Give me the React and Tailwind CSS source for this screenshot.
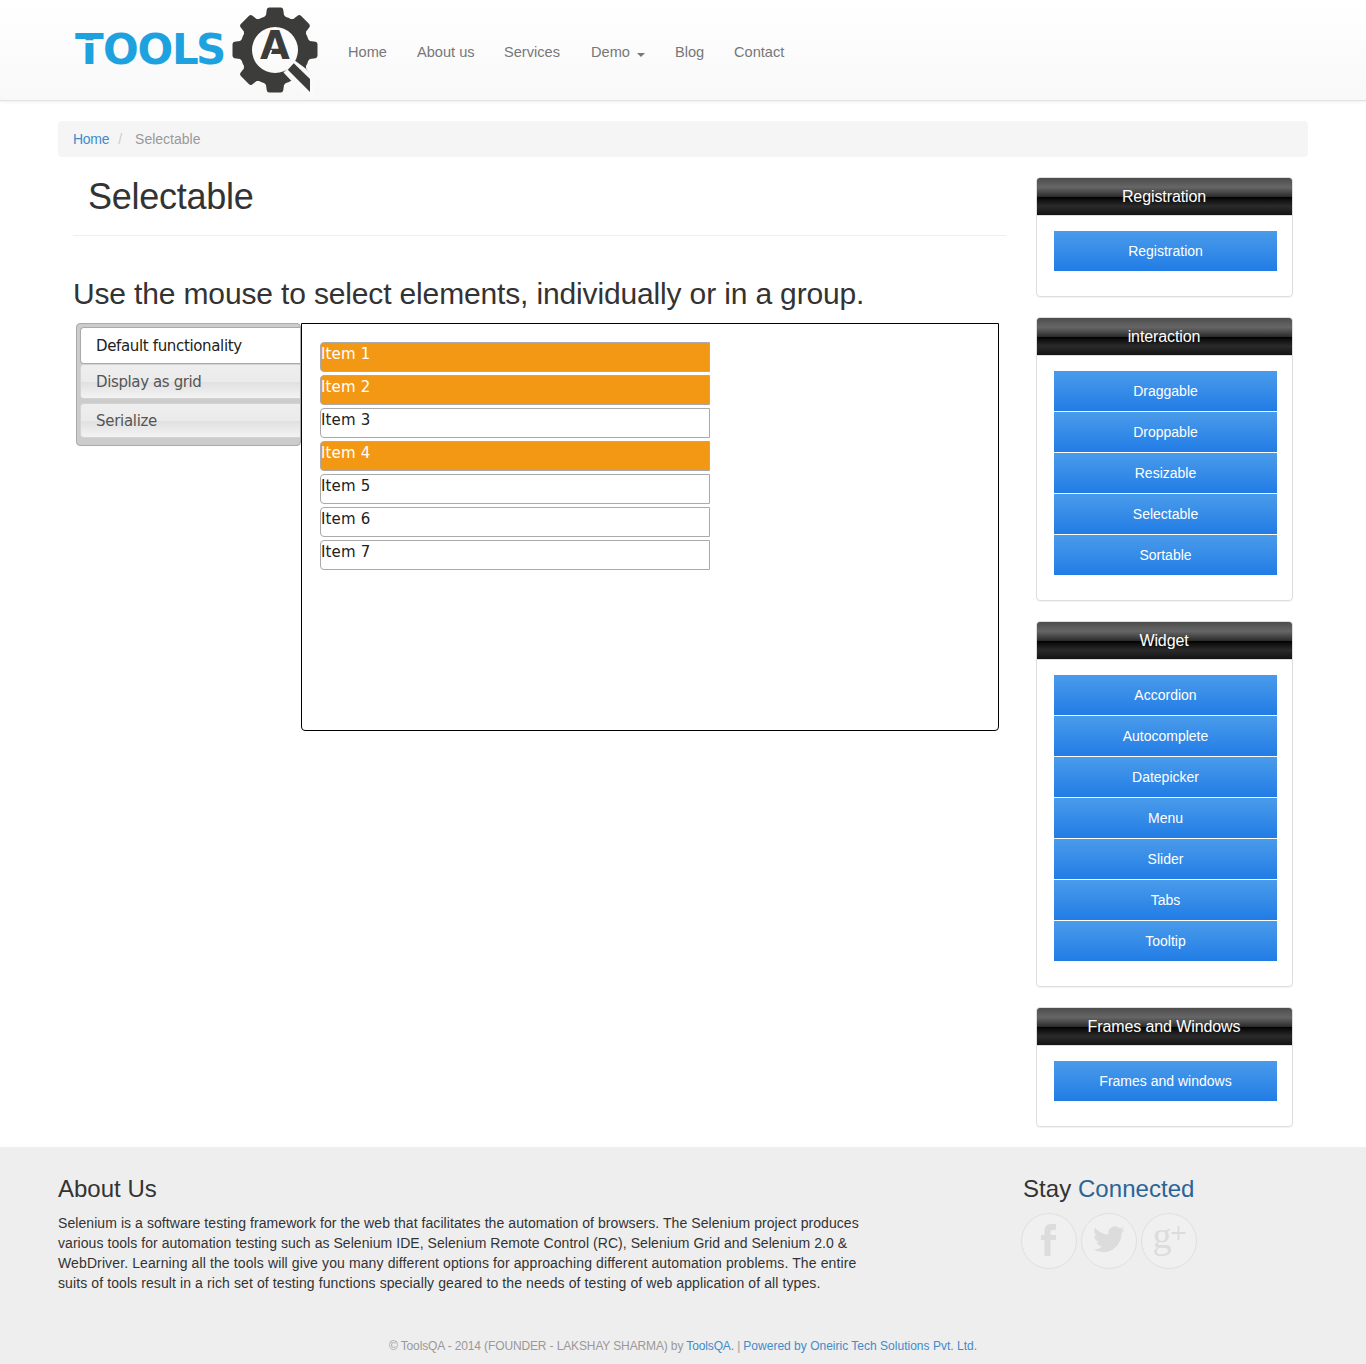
import React from "react";

const navItems = [
  { label: "Home", cls: "w-[69px]" },
  { label: "About us", cls: "w-[87px]" },
  { label: "Services", cls: "w-[87px]" },
  { label: "Demo", cls: "w-[84px]", caret: true },
  { label: "Blog", cls: "w-[59px]" },
  { label: "Contact", cls: "w-[80px]" },
];

const panels = [
  { title: "Registration", links: ["Registration"] },
  { title: "interaction", links: ["Draggable", "Droppable", "Resizable", "Selectable", "Sortable"] },
  { title: "Widget", links: ["Accordion", "Autocomplete", "Datepicker", "Menu", "Slider", "Tabs", "Tooltip"] },
  { title: "Frames and Windows", links: ["Frames and windows"] },
];

const selected = [1, 2, 4];

function Logo() {
  const teeth = [0, 45, 90, 135, 180, 225, 270, 315];
  return (
    <svg width="270" height="100" viewBox="60 0 270 100" className="block shrink-0" aria-label="ToolsQA">
      <g fill="#1ea2df" fontFamily="'DejaVu Sans'" fontWeight="bold" fontSize="42">
        <text x="75 103 137.500 172 196" y="63.700">TOOLS</text>
      </g>
      <rect x="82" y="40.300" width="16" height="2.700" fill="#fcfcfc" />
      <g fill="#3c3c3a">
        {teeth.map((a) => (
          <path
            key={a}
            transform={`rotate(${a} 275 50)`}
            d="M261.500 20 L266 15 L266.800 9.500 Q267.200 7.500 269.200 7.500 L280.800 7.500 Q282.800 7.500 283.200 9.500 L284 15 L288.500 20 Z"
          />
        ))}
        <path fillRule="evenodd" d="M275 15a35 35 0 1 0 0 70a35 35 0 1 0 0-70ZM275 27a23 23 0 1 1 0 46a23 23 0 1 1 0-46Z" />
      </g>
      <path d="M292 58.500 L305 68 L314 76 L314 98 L308 97 L291 80.500 L283.500 72.500 L288 68Z" fill="#fafafa" />
      <path d="M293.800 63.200 L310 79 L310 92 L287.800 69.800Z" fill="#3c3c3a" />
      <text x="275" y="59.300" textAnchor="middle" fill="#3c3c3a" fontFamily="'DejaVu Sans'" fontWeight="bold" fontSize="38.500">A</text>
      <path d="M271.500 50 L267.700 60" stroke="#fcfcfc" strokeWidth="1.800" />
    </svg>
  );
}

function Header() {
  return (
    <header className="h-[101px] border-b border-[#e2e2e2] bg-linear-to-b from-white to-[#f8f8f8] pl-[60px] shadow-[0_1px_3px_rgba(0,0,0,0.07)]">
      <nav className="flex h-[100px]">
        <Logo />
        <ul className="flex pt-[42px] pl-[18px] text-[14.6px] leading-5 text-[#777]">
          {navItems.map((n) => (
            <li key={n.label} className={`${n.cls} flex whitespace-nowrap`}>
              {n.label}
              {n.caret && <span className="mt-[11px] ml-[7px] h-0 w-0 border-x-4 border-t-4 border-x-transparent border-t-[#777]" />}
            </li>
          ))}
        </ul>
      </nav>
    </header>
  );
}

function Tabs() {
  return (
    <section className="flex items-start pl-[3px] font-['DejaVu_Sans',sans-serif] text-[15px]">
      <ul className="h-[123px] w-[225px] rounded-[4px] border border-[#aaa] bg-[#ccc] pt-[3px] pl-[3px] leading-5">
        <li className="h-[37px] rounded-l-[4px] border border-r-0 border-[#aaa] bg-white pt-[8px] pl-[15px] tracking-[-0.35px] text-[#212121]">
          Default functionality
        </li>
        <li className="h-[35px] rounded-l-[4px] border border-r-0 border-[#d3d3d3] bg-[linear-gradient(#eee_0%,#ebebeb_50%,#e0e0e0_51%,#f3f3f3_100%)] pt-[7px] pl-[15px] tracking-[-0.38px] text-[#555]">
          Display as grid
        </li>
        <li className="mt-[4px] h-[35px] rounded-l-[4px] border border-r-0 border-[#d3d3d3] bg-[linear-gradient(#eee_0%,#ebebeb_50%,#e0e0e0_51%,#f3f3f3_100%)] pt-[7px] pl-[15px] tracking-[-0.3px] text-[#555]">
          Serialize
        </li>
      </ul>
      <div className="h-[408px] w-[698px] rounded-[4px] rounded-t-none border border-black pt-[18px] pl-[18px]">
        <ol className="flex w-[390px] flex-col gap-[3px]">
          {[1, 2, 3, 4, 5, 6, 7].map((n) => (
            <li
              key={n}
              className={`h-[30px] rounded-l-[4px] border border-[#aaa] leading-[22px] tracking-[0.15px] ${
                selected.includes(n) ? "bg-[#f39814] text-white" : "bg-white text-[#222]"
              }`}
            >
              Item {n}
            </li>
          ))}
        </ol>
      </div>
    </section>
  );
}

function Panel({ title, links }) {
  return (
    <section className="rounded-[4px] border border-[#ddd] pb-[25px] shadow-[0_1px_1px_rgba(0,0,0,0.05)]">
      <h3 className="h-[38px] rounded-t-[3px] border-b border-[#ddd] bg-[linear-gradient(to_bottom,#4c4c4c_0%,#595959_12%,#666_25%,#474747_39%,#2c2c2c_50%,#000_51%,#111_60%,#2b2b2b_76%,#1c1c1c_91%,#131313_100%)] pr-px text-center text-[16px] leading-[37px] tracking-[-0.1px] text-white">
        {title}
      </h3>
      <ul className="mt-[15px] mr-[15px] ml-[17px] flex flex-col gap-px">
        {links.map((l) => (
          <li key={l} className="h-10 bg-linear-to-b from-[#499bea] to-[#207ce5] text-center text-[14px] leading-10 text-white">
            {l}
          </li>
        ))}
      </ul>
    </section>
  );
}

function Social({ children }) {
  return (
    <svg width="56" height="56" viewBox="0 0 56 56" className="block">
      <circle cx="28" cy="28" r="27.500" fill="#f0f0f0" stroke="#dfdfdf" />
      {children}
    </svg>
  );
}

function Footer() {
  return (
    <footer className="h-[217px] bg-[#eee] pt-[27px]">
      <div className="flex px-[58px]">
        <div className="w-[965px]">
          <h3 className="text-[24px] leading-[30px]">About Us</h3>
          <p className="mt-[9px] text-[14px] leading-5 whitespace-nowrap">
            <span className="block tracking-[0.07px]">Selenium is a software testing framework for the web that facilitates the automation of browsers. The Selenium project produces</span>
            <span className="block tracking-[0.052px]">various tools for automation testing such as Selenium IDE, Selenium Remote Control (RC), Selenium Grid and Selenium 2.0 &amp;</span>
            <span className="block tracking-[0.117px]">WebDriver. Learning all the tools will give you many different options for approaching different automation problems. The entire</span>
            <span className="block tracking-[0.1px]">suits of tools result in a rich set of testing functions specially geared to the needs of testing of web application of all types.</span>
          </p>
        </div>
        <div>
          <h3 className="text-[24px] leading-[30px] tracking-[0.05px]">
            Stay <span className="text-[#2a6496]">Connected</span>
          </h3>
          <div className="mt-[9px] -ml-[2px] flex gap-1">
            <Social>
              <path fill="#dcdcdc" d="M35 11v6h-3.500c-1.500 0-2 .8-2 2v3H35v5h-5.500v16h-6V27H20v-5h3.500v-4c0-5 2.500-7 6.500-7Z" />
            </Social>
            <Social>
              <path
                fill="#dcdcdc"
                transform="translate(12 10.500) scale(1.320)"
                d="M23.950 4.570a10 10 0 0 1-2.820.770 4.960 4.960 0 0 0 2.160-2.720c-.950.550-2 .950-3.130 1.180a4.920 4.920 0 0 0-8.380 4.480C7.690 8.090 4.070 6.130 1.640 3.160a4.820 4.820 0 0 0-.670 2.480c0 1.710.870 3.210 2.190 4.100a4.900 4.900 0 0 1-2.230-.620v.060a4.920 4.920 0 0 0 3.950 4.830 5 5 0 0 1-2.210.080 4.940 4.940 0 0 0 4.600 3.420A9.870 9.870 0 0 1 0 19.540a14 14 0 0 0 7.550 2.210c9.050 0 14-7.500 14-13.980 0-.210 0-.420-.020-.630a9.940 9.940 0 0 0 2.460-2.550z"
              />
            </Social>
            <Social>
              <text x="11.500" y="34.500" fill="#dcdcdc" fontFamily="'Liberation Serif', serif" fontSize="38">g</text>
              <path d="M37.500 13V27M30.500 20h14" stroke="#dcdcdc" strokeWidth="1.800" />
            </Social>
          </div>
        </div>
      </div>
      <p className="mt-[43px] text-center text-[12px] leading-5 tracking-[-0.13px] whitespace-nowrap text-[#999]">
        © ToolsQA - 2014 (FOUNDER - LAKSHAY SHARMA) by <a className="text-[#428bca]">ToolsQA.</a> |{" "}
        <a className="tracking-[0.01px] text-[#428bca]">Powered by Oneiric Tech Solutions Pvt. Ltd.</a>
      </p>
    </footer>
  );
}

export default function App() {
  return (
    <div className="h-[1364px] w-[1366px] overflow-hidden bg-white font-['Liberation_Sans',Arial,sans-serif] text-[#333]">
      <Header />
      <div className="mx-[58px] mt-5 flex h-9 rounded-[4px] bg-[#f5f5f5] pl-[15px] text-[14px] leading-9">
        <a className="tracking-[-0.3px] text-[#428bca]">Home</a>
        <span className="pl-[9px] text-[#ccc]">/</span>
        <span className="pl-[13px] text-[#999]">Selectable</span>
      </div>
      <div className="flex h-[990px] px-[73px] pt-5">
        <main className="w-[933px]">
          <h1 className="h-[59px] border-b border-[#eee] pl-[15px] text-[36px] leading-[40px] tracking-[-0.27px]">Selectable</h1>
          <h2 className="mt-[41px] h-[46px] text-[30px] leading-[33px] tracking-[-0.15px] whitespace-nowrap">
            Use the mouse to select elements, individually or in a group.
          </h2>
          <Tabs />
        </main>
        <aside className="ml-[30px] flex w-[257px] flex-col gap-5">
          {panels.map((p) => (
            <Panel key={p.title} {...p} />
          ))}
        </aside>
      </div>
      <Footer />
    </div>
  );
}
